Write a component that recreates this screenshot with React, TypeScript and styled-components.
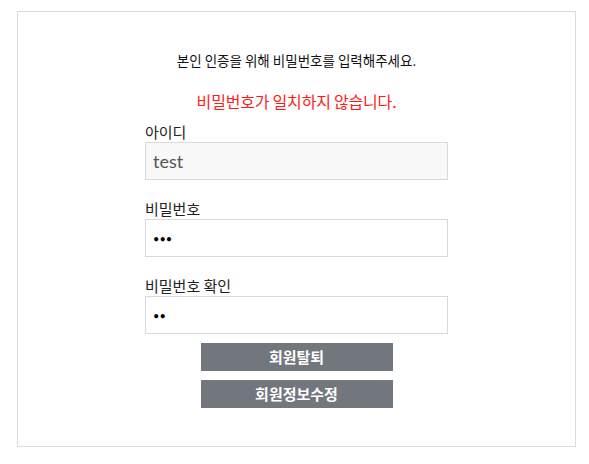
import React from "react";
import styled, { createGlobalStyle } from "styled-components";

const GlobalStyle = createGlobalStyle`
  html, body {
    margin: 0;
    padding: 0;
    background: #ffffff;
  }
  body {
    font-family: "Noto Sans CJK KR", "Noto Sans", sans-serif;
    color: #222222;
  }
  * { box-sizing: border-box; }
`;

const Page = styled.div`
  padding: 11px 14px 0 17px;
`;

const Card = styled.section`
  width: 559px;
  height: 436px;
  border: 1px solid #dcdcdc;
  display: flex;
  flex-direction: column;
  align-items: center;
  padding-top: 38px;
`;

const Notice = styled.p`
  margin: 0;
  font-size: 13.5px;
  line-height: 20px;
  letter-spacing: 0;
  color: #111111;
  text-align: center;
`;

const ErrorText = styled.p`
  margin: 21px 0 0;
  font-size: 16px;
  line-height: 20px;
  letter-spacing: -0.2px;
  color: #ff1a1a;
  text-align: center;
`;

const Form = styled.form`
  width: 303px;
  display: flex;
  flex-direction: column;
  margin-top: 11px;
`;

const Field = styled.div<{ $first?: boolean }>`
  display: flex;
  flex-direction: column;
  margin-top: ${(p) => (p.$first ? "0" : "19px")};
`;

const Label = styled.label`
  font-size: 15px;
  line-height: 20px;
  color: #222222;
`;

const Input = styled.input<{ $readOnly?: boolean }>`
  width: 303px;
  height: 38px;
  border: 1px solid #d9d9d9;
  background: ${(p) => (p.$readOnly ? "#f8f8f8" : "#ffffff")};
  padding: 0 7px;
  font-family: "Lato", "Noto Sans CJK KR", sans-serif;
  font-size: 18px;
  color: #555555;
  outline: none;
  &[type="password"] {
    color: #000000;
    font-size: 11px;
    letter-spacing: 0;
  }
`;

const Buttons = styled.div`
  display: flex;
  flex-direction: column;
  align-items: center;
  gap: 9px;
  margin-top: 9px;
`;

const Button = styled.button`
  width: 192px;
  height: 28px;
  border: none;
  border-radius: 0;
  background: #72767d;
  color: #ffffff;
  font-family: "Noto Sans CJK KR", sans-serif;
  font-weight: 700;
  font-size: 15px;
  line-height: 28px;
  padding: 0;
  cursor: pointer;
`;

export default function App() {
  return (
    <>
      <GlobalStyle />
      <Page>
        <Card>
          <Notice>본인 인증을 위해 비밀번호를 입력해주세요.</Notice>
          <ErrorText>비밀번호가 일치하지 않습니다.</ErrorText>
          <Form onSubmit={(e) => e.preventDefault()}>
            <Field $first>
              <Label htmlFor="uid">아이디</Label>
              <Input id="uid" $readOnly readOnly defaultValue="test" />
            </Field>
            <Field>
              <Label htmlFor="pw">비밀번호</Label>
              <Input id="pw" type="password" defaultValue="123" />
            </Field>
            <Field>
              <Label htmlFor="pw2">비밀번호 확인</Label>
              <Input id="pw2" type="password" defaultValue="12" />
            </Field>
          </Form>
          <Buttons>
            <Button type="button">회원탈퇴</Button>
            <Button type="button">회원정보수정</Button>
          </Buttons>
        </Card>
      </Page>
    </>
  );
}
